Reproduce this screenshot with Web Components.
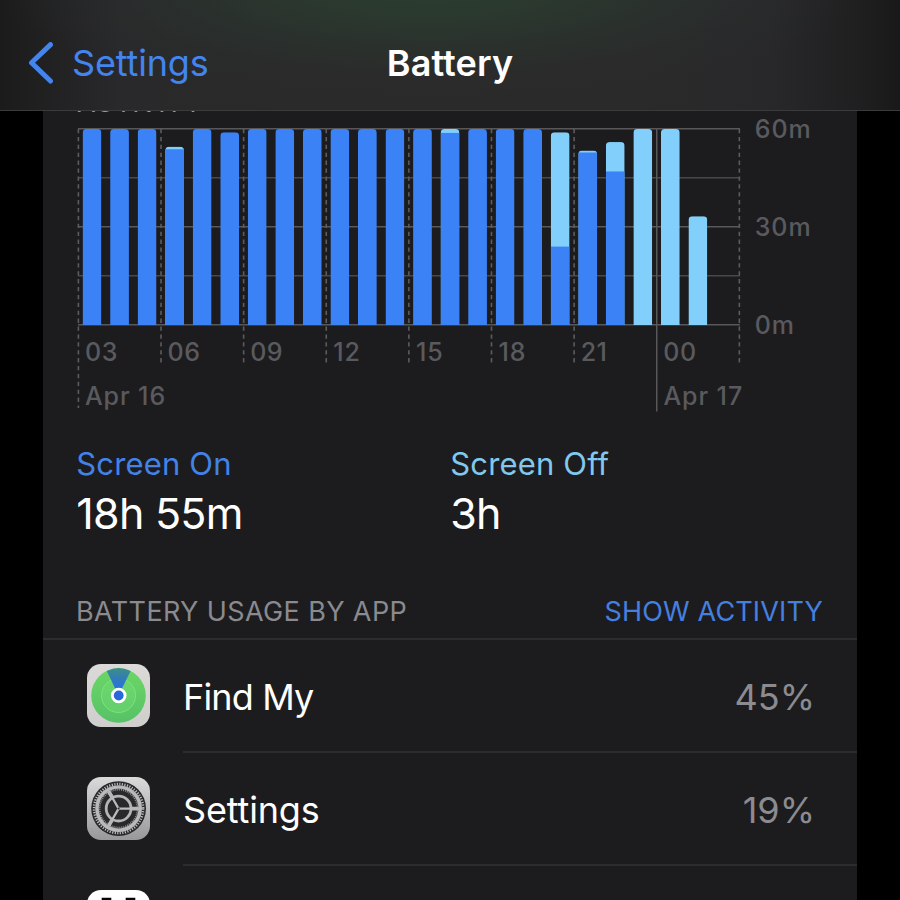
<!DOCTYPE html>
<html lang="en">
<head>
<meta charset="utf-8">
<title>Battery</title>
<style>
html, body { margin: 0; height: 100%; background: #000; overflow: hidden; }
body { font-family: Inter, "Liberation Sans", sans-serif; color: #fff; }
</style>
</head>
<body>
<battery-screen></battery-screen>
<script>
const define = (name, html, setup) => customElements.define(name, class extends HTMLElement {
  connectedCallback() {
    if (this.shadowRoot) return;
    const t = document.createElement('template');
    t.innerHTML = html;
    this.attachShadow({ mode: 'open' }).append(t.content.cloneNode(true));
    if (setup) setup(this, this.shadowRoot);
  }
});

define('nav-bar', `
<style>
:host { display: grid; grid-template-columns: 1fr auto 1fr; align-items: center; box-sizing: border-box;
  height: 111px; padding: 16px 28px 0; position: relative; z-index: 1; border-bottom: 1px solid #3b3b3d;
  font-size: 36px; line-height: 48px;
  background:
    radial-gradient(ellipse 430px 112px at 430px -14px, rgba(42,61,48,1) 0%, rgba(43,58,47,.88) 30%, rgba(42,52,46,.6) 58%, rgba(42,46,44,.3) 80%, rgba(42,42,43,0) 100%),
    linear-gradient(90deg, #1b1b1b 0, #1f1f20 30px, #29292b 120px, #2a2a2a 300px, #2a2a2a 640px, #28282a 770px, #1f1f20 860px, #191919 900px); }
.back { display: flex; align-items: center; gap: 18px; color: #4384ee; letter-spacing: -.15px; }
.title { font-weight: 600; letter-spacing: .1px; }
svg { display: block; }
</style>
<div class="back"><svg width="26" height="42" viewBox="0 0 26 42"><path d="M22.5 2.6 3.5 20.7 22.5 39" fill="none" stroke="#4384ee" stroke-width="5" stroke-linecap="round" stroke-linejoin="round"/></svg><slot name="back"></slot></div>
<div class="title"><slot></slot></div>`);

define('activity-chart', `
<style>
:host { display: block; height: 309px; margin-top: -9px; }
svg { display: block; font-size: 25px; font-weight: 500; }
text { fill: #5a5a5e; letter-spacing: .5px; }
.wide { letter-spacing: .9px; }
</style>
<svg width="814" height="309" viewBox="43 110 814 309"></svg>`, (el, root) => {
  const left = 78.4, step = 27.54, base = 325, perMin = 196 / 60;
  const on = '#3c82f7', off = '#82cffb';
  // minutes of [screen on, screen off] for each hour
  const hours = [[60,0],[60,0],[60,0],[53.8,.8],[60,0],[59,0],[60,0],[60,0],[60,0],[60,0],[60,0],[60,0],
    [60,0],[58.8,1.2],[60,0],[60,0],[60,0],[24,35],[52.8,.6],[47,9],[0,60],[0,60],[0,33.3]];
  let s = '<defs>', grid = '', bars = '', labels = '';
  for (let i = 0; i < 5; i++) {
    const y = [129, 178, 227, 276, 325][i];
    grid += `<path d="M78 ${y - .3}H740" stroke="${i % 2 ? '#48484a' : '#58585a'}" stroke-width="1.5"/>`;
  }
  for (let i = 0; i <= 8; i++) {
    const x = left + step * 3 * i, end = i === 0 ? 408 : 364;
    grid += i === 7
      ? `<path d="M${x} 129V411.5" stroke="#58585a" stroke-width="1.5"/>`
      : `<path d="M${x} 129V${end}" stroke="#5c5c5f" stroke-width="1.6" stroke-dasharray="4.3 3.6"/>`;
  }
  hours.forEach(([a, b], i) => {
    const x = left + step * i + 4.2, h = (a + b) * perMin, ya = base - a * perMin, top = base - h;
    s += `<clipPath id="c${i}"><path d="M${x} ${base}V${top + 4}q0-4 4-4h10.8q4 0 4 4V${base}z"/></clipPath>`;
    bars += `<g clip-path="url(#c${i})"><rect x="${x}" y="${top}" width="18.8" height="${h}" fill="${b ? off : on}"/>`
      + (a && b ? `<rect x="${x}" y="${ya}" width="18.8" height="${base - ya}" fill="${on}"/>` : '') + '</g>';
  });
  ['03','06','09','12','15','18','21','00'].forEach((t, i) => {
    labels += `<text x="${left + step * 3 * i + (t[0] === '1' ? 7 : 6.6)}" y="360.5"${t[0] === '1' ? ' class="wide"' : ''}>${t}</text>`;
  });
  labels += '<g class="wide"><text class="wide" x="85" y="404.5">Apr 16</text><text class="wide" x="663.5" y="404.5">Apr 17</text>'
    + '<text class="wide" x="754.8" y="138.3">60m</text><text class="wide" x="754.8" y="236.3">30m</text><text class="wide" x="754.8" y="334.3">0m</text></g>';
  root.querySelector('svg').innerHTML = s + '</defs>' + grid + bars + labels;
});

define('usage-total', `
<style>
:host { display: flex; flex-direction: column; gap: 4px; margin-left: -.7px; }
.label { font-size: 31px; line-height: 40px; color: var(--tone); letter-spacing: .15px; }
.value { font-size: 43px; line-height: 50px; letter-spacing: -.75px; }
</style>
<div class="label"><slot name="label"></slot></div><div class="value"><slot></slot></div>`);

define('list-header', `
<style>
:host { display: flex; justify-content: space-between; align-items: center; height: 54px; padding: 0 34px 0 33px;
  border-bottom: 2px solid #2c2c2e; font-size: 27px; line-height: 32px; color: #8a8a8f; }
span { position: relative; padding-top: 2px; }
.t { letter-spacing: .38px; }
.action { color: #4580e0; letter-spacing: .15px; }
</style>
<span class="t"><slot></slot></span><span class="action"><slot name="action"></slot></span>`);

define('app-row', `
<style>
:host { display: flex; gap: 33px; padding-left: 44px; align-items: stretch; height: 113px; }
.icon { display: flex; align-items: center; padding-bottom: 2px; }
.body { flex: 1; display: flex; justify-content: space-between; align-items: center; padding: 3px 42px 0 0;
  border-bottom: 2px solid #2c2c2e; font-size: 36px; line-height: 48px; }
.name { letter-spacing: var(--track, -.15px); }
.pct { color: #8b8b90; margin-top: -1px; }
</style>
<div class="icon"><slot name="icon"></slot></div>
<div class="body"><span class="name"><slot></slot></span><span class="pct"><slot name="pct"></slot></span></div>`);

define('app-icon', `<style>:host { display: block; width: 63px; height: 63px; } svg { display: block; }</style>`, (el, root) => {
  const art = {
    findmy: `<defs><linearGradient id="b" x2="0" y2="1"><stop stop-color="#dcdad9"/><stop offset="1" stop-color="#d0cecd"/></linearGradient>
      <linearGradient id="g" x2="0" y2="1"><stop stop-color="#6bd766"/><stop offset="1" stop-color="#57c266"/></linearGradient>
      <linearGradient id="w" x2="0" y2="1"><stop stop-color="#3c8f86"/><stop offset=".3" stop-color="#337fae"/><stop offset=".7" stop-color="#2b72dd"/></linearGradient></defs>
      <rect width="63" height="63" rx="14" fill="url(#b)"/>
      <circle cx="31.5" cy="31.5" r="27.3" fill="url(#g)"/>
      <circle cx="31.5" cy="31.5" r="17" fill="#70dc73" fill-opacity=".45" stroke="#7de27c" stroke-width="1"/>
      <path d="M31.5 31.5 19.8 7A27.3 27.3 0 0 1 43.6 7z" fill="url(#w)"/>
      <circle cx="31.7" cy="31.5" r="7.8" fill="#fff"/><circle cx="31.7" cy="31.5" r="4.9" fill="#2868dd"/>`,
    settings: `<defs><linearGradient id="b" x2="0" y2="1"><stop stop-color="#dadadb"/><stop offset="1" stop-color="#98989b"/></linearGradient></defs>
      <rect width="63" height="63" rx="14" fill="url(#b)"/>
      <g fill="none" transform="translate(31.6 31.6)">
      <circle r="27.4" fill="#29292b"/>
      <circle r="24.6" stroke="#c2c2c4" stroke-width="2.4" stroke-dasharray="1.15 1.426"/>
      <circle r="21.6" stroke="#b9b9bb" stroke-width="3.6"/>
      <circle r="19" stroke="#98989a" stroke-width="1.8" stroke-dasharray="1 .99"/>
      <circle r="12.4" stroke="#b4b4b6" stroke-width="2.8"/>
      <path d="M0 0H20M0 0-10-17.3M0 0-10 17.3" stroke="#bbbbbd" stroke-width="2.2"/>
      <path d="M13 0H20M-6.5-11.3-10-17.3M-6.5 11.3-10 17.3" stroke="#b7b7b9" stroke-width="3.8"/>
      <circle r="1" fill="#29292b"/></g>`,
    third: `<rect width="63" height="63" rx="14" fill="#fff"/><path d="M14.7 7.7h9.6v12h-9.6zM38.7 7.7h9.6v12h-9.6z" fill="#050505"/>`
  };
  root.innerHTML += `<svg width="63" height="63" viewBox="0 0 63 63">${art[el.getAttribute('kind')]}</svg>`;
});

define('battery-screen', `
<style>
:host { display: flex; flex-direction: column; height: 900px; width: 900px; overflow: hidden; }
.card { flex: 1; min-height: 0; margin: 0 43px; background: #1c1c1e; }
.heading { margin: -24px 34px 0; font-size: 27px; line-height: 32px; color: #98989d; letter-spacing: .1px; }
.totals { display: grid; grid-template-columns: 374px 1fr; padding: 25px 34px 46px; }
</style>
<nav-bar><span slot="back">Settings</span>Battery</nav-bar>
<div class="card">
  <div class="heading">ACTIVITY</div>
  <activity-chart></activity-chart>
  <div class="totals">
    <usage-total style="--tone:#4382e6"><span slot="label">Screen On</span>18h 55m</usage-total>
    <usage-total style="--tone:#82c8ee"><span slot="label">Screen Off</span>3h</usage-total>
  </div>
  <list-header>BATTERY USAGE BY APP<span slot="action">SHOW ACTIVITY</span></list-header>
  <app-row style="--track:-.85px"><app-icon slot="icon" kind="findmy"></app-icon>Find My<span slot="pct">45%</span></app-row>
  <app-row><app-icon slot="icon" kind="settings"></app-icon>Settings<span slot="pct">19%</span></app-row>
  <app-row><app-icon slot="icon" kind="third"></app-icon></app-row>
</div>`);
</script>
</body>
</html>
